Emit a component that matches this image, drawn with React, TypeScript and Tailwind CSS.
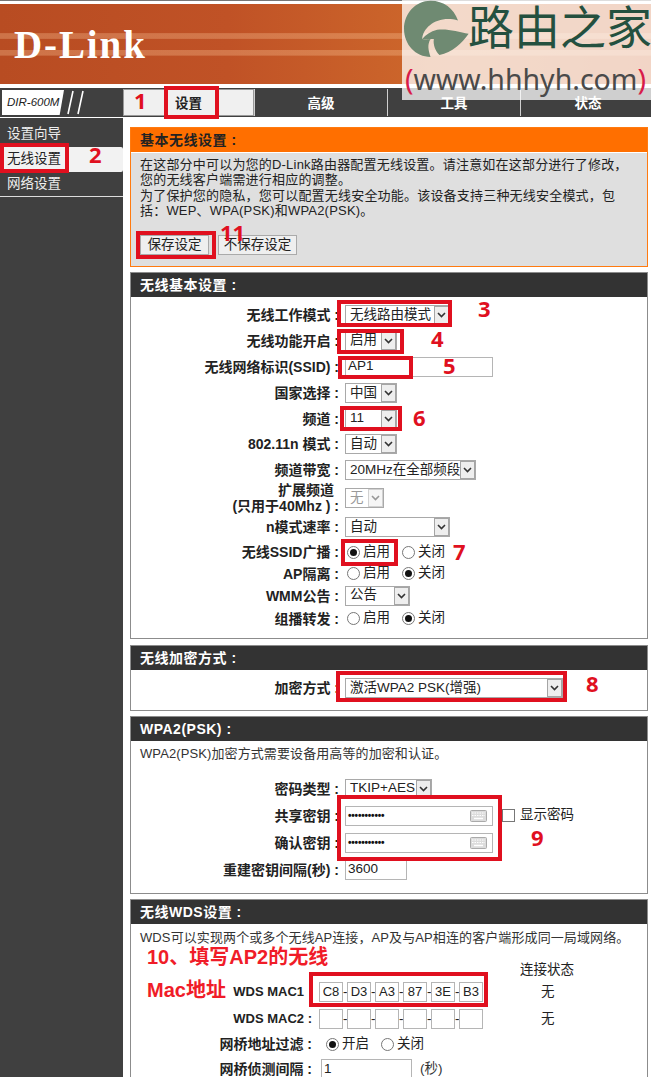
import React from 'react';

const font = 'font-["Liberation_Sans","Noto_Sans_CJK_SC",sans-serif]';

function Arrow({ disabled }: { disabled?: boolean }) {
  return (
    <span className={`flex h-full w-[15px] shrink-0 items-center justify-center border border-[#a5a5a5] bg-[#eeeeee] ${disabled ? 'opacity-50' : ''}`}>
      <svg width="9" height="6" viewBox="0 0 9 6">
        <path d="M1 1l3.5 3.5L8 1" fill="none" stroke="#333" strokeWidth="1.6" />
      </svg>
    </span>
  );
}

function Select({ text, width, disabled }: { text: string; width: string; disabled?: boolean }) {
  return (
    <div className={`flex h-[20px] items-center justify-between border border-[#a9a9a9] bg-white pl-1 ${width} ${disabled ? 'text-[#999]' : 'text-[#222]'}`}>
      <span className="whitespace-nowrap">{text}</span>
      <Arrow disabled={disabled} />
    </div>
  );
}

function Radio({ on, label, className = '' }: { on?: boolean; label: string; className?: string }) {
  return (
    <span className={`flex items-center ${className}`}>
      <span className="mr-[3px] flex h-[13px] w-[13px] items-center justify-center rounded-full border border-[#777] bg-white">
        {on && <span className="h-[7px] w-[7px] rounded-full bg-[#111]" />}
      </span>
      <span className="text-[#222]">{label}</span>
    </span>
  );
}

function Row({ label, height, children }: { label: React.ReactNode; height: string; children: React.ReactNode }) {
  return (
    <div className={`flex items-center ${height}`}>
      <div className="w-[208px] shrink-0 whitespace-pre text-right text-[14px] font-bold leading-[16px] text-[#222]">{label}</div>
      <div className="ml-[6px] flex items-center">{children}</div>
    </div>
  );
}

function Panel({ title, height, className = '', children }: { title: string; height: string; className?: string; children: React.ReactNode }) {
  return (
    <section className={`mr-[3px] border border-[#8c8c8c] bg-white ${height} ${className}`}>
      <h2 className="flex h-[24px] items-center whitespace-pre bg-[#333333] pl-[9px] text-[14px] font-bold tracking-[0.5px] text-white">{title}</h2>
      {children}
    </section>
  );
}

function Box({ className = '', children }: { className?: string; children?: React.ReactNode }) {
  return <div className={`flex h-[20px] items-center border border-[#b5b5b5] bg-white pl-[2px] text-[#222] ${className}`}>{children}</div>;
}

function KeyInput() {
  return (
    <div className="flex h-[20px] w-[148px] items-center justify-between border border-[#b5b5b5] bg-white pl-[2px] pr-[5px]">
      <span className="text-[10px] font-bold tracking-[-0.2px] text-[#111]">•••••••••••</span>
      <svg width="17" height="12" viewBox="0 0 17 12">
        <rect x="0.5" y="0.5" width="16" height="11" rx="1" fill="#dcdcdc" stroke="#aaa" />
        <path d="M2 3h13M2 5.5h13" stroke="#fff" strokeWidth="1" strokeDasharray="1.5 1" />
        <path d="M4 8.5h9" stroke="#fff" strokeWidth="1.4" />
      </svg>
    </div>
  );
}

function Mac({ values }: { values?: string[] }) {
  const cells = values ?? ['', '', '', '', '', ''];
  return (
    <div className="flex items-center">
      {cells.map((v, i) => (
        <React.Fragment key={i}>
          <span className="flex h-[20px] w-[24px] items-center justify-center border border-[#b5b5b5] bg-white text-[13px] text-[#222]">{v}</span>
          {i < 5 && <span className="w-[4px] text-center text-[#222]">-</span>}
        </React.Fragment>
      ))}
    </div>
  );
}

function RedBox({ className }: { className: string }) {
  return <div className={`pointer-events-none absolute border-[4px] border-[#e0101f] ${className}`} />;
}

function Num({ className, children }: { className: string; children: React.ReactNode }) {
  return <div className={`absolute font-["Open_Sans",sans-serif] text-[22px] font-bold leading-none text-[#e0101f] ${className}`}>{children}</div>;
}

const side = 'flex items-center pl-[7px] text-[13.5px]';
const tab = 'flex items-center justify-center border-l border-[#cfcfcf] pt-[3px] text-[13.5px] font-bold text-white';
const wdsLabel = 'w-[181px] shrink-0 whitespace-pre text-right text-[14px] font-bold text-[#222]';

export default function App() {
  return (
    <div className={`relative h-[1077px] w-[651px] overflow-hidden bg-white text-[13.5px] ${font}`}>
      {/* header */}
      <div className="h-[1px] bg-[#777]" />
      <div className="mt-[3px] flex h-[80px] items-center bg-[linear-gradient(180deg,transparent_36%,rgba(255,205,160,0.3)_37%,rgba(255,205,160,0.3)_43%,transparent_44%,transparent_57%,rgba(255,205,160,0.3)_58%,rgba(255,205,160,0.3)_64%,transparent_65%),linear-gradient(90deg,#b84c22_0%,#c05226_35%,#cf6a2c_70%,#c9591f_100%)] pl-[14px]">
        <span className='font-["Liberation_Serif",serif] text-[39px] font-bold leading-none tracking-[1.9px] text-white'>D-Link</span>
      </div>

      {/* nav */}
      <div className="mt-[4px] flex h-[29px] bg-[#404040] py-[1px]">
        <div className="flex w-[123px] shrink-0 items-center pl-[2px]">
          <span className="flex h-[25px] w-[62px] items-center bg-white pl-[5px] text-[11.5px] italic text-[#222] [clip-path:polygon(0_0,100%_0,93%_100%,0_100%)]">DIR-600M</span>
          <svg width="20" height="25" viewBox="0 0 20 25" className="ml-[2px]">
            <path d="M7 1L2 24M17 1L12 24" stroke="#fff" strokeWidth="1.6" />
          </svg>
        </div>
        <div className="flex flex-1">
          <div className="flex w-[131px] shrink-0 items-center justify-center border border-[#999] bg-[#f0f0f0] pt-[3px] text-[13.5px] font-bold text-[#222]">设置</div>
          <div className={`${tab} w-[133px]`}>高级</div>
          <div className={`${tab} w-[133px]`}>工具</div>
          <div className={`${tab} w-[131px] pl-[4px]`}>状态</div>
        </div>
      </div>

      <div className="flex h-[960px] pt-[1px]">
        {/* sidebar */}
        <aside className="w-[123px] shrink-0 bg-[#404040] pt-[4px] text-[#eee]">
          <div className={`${side} h-[25px]`}>设置向导</div>
          <div className={`${side} h-[25px] rounded-r-[2px] bg-[#f2f2f2] text-[#222]`}>无线设置</div>
          <div className={`${side} h-[25px] border-b border-[#ddd]`}>网络设置</div>
        </aside>

        {/* main */}
        <main className="flex-1 pl-[7px] pt-[9px]">
          <section className="mr-[3px] h-[140px] border border-[#ff7a10] bg-[#dfdfdf]">
            <h2 className="flex h-[24px] items-center whitespace-pre bg-[#ff6f00] pl-[9px] text-[14px] font-bold tracking-[0.5px] text-[#222]">基本无线设置 :</h2>
            <div className="border-t border-white pl-[9px] pt-[4px] text-[13px] leading-[15.4px] tracking-[0.2px] text-[#222]">
              <p>在这部分中可以为您的D-Link路由器配置无线设置。请注意如在这部分进行了修改，</p>
              <p>您的无线客户端需进行相应的调整。</p>
              <p>为了保护您的隐私，您可以配置无线安全功能。该设备支持三种无线安全模式，包</p>
              <p>括：WEP、WPA(PSK)和WPA2(PSK)。</p>
              <div className="mt-[16px] flex gap-[9px] tracking-normal">
                <button className="h-[20px] w-[69px] border border-[#aaa] bg-[#efefef] text-[13.5px] text-[#222]">保存设定</button>
                <button className="h-[20px] w-[79px] border border-[#aaa] bg-[#efefef] text-[13.5px] text-[#222]">不保存设定</button>
              </div>
            </div>
          </section>

          <Panel title="无线基本设置 :" height="h-[367px]" className="mt-[5px]">
            <div className="pt-[5px]">
              <Row label="无线工作模式 :" height="h-[26px]"><Select text="无线路由模式" width="w-[105px]" /></Row>
              <Row label="无线功能开启 :" height="h-[25px]"><Select text="启用" width="w-[52px]" /></Row>
              <Row label="无线网络标识(SSID) :" height="h-[27px]"><Box className="w-[148px]">AP1</Box></Row>
              <Row label="国家选择 :" height="h-[26px]"><Select text="中国" width="w-[52px]" /></Row>
              <Row label="频道 :" height="h-[25px]"><Select text="11" width="w-[52px]" /></Row>
              <Row label="802.11n 模式 :" height="h-[26px]"><Select text="自动" width="w-[52px]" /></Row>
              <Row label="频道带宽 :" height="h-[26px]"><Select text="20MHz在全部频段" width="w-[131px]" /></Row>
              <Row label={<>扩展频道<span className="pr-[5px]" />{'\n'}(只用于40Mhz ) :</>} height="h-[30px]"><Select text="无" width="w-[39px]" disabled /></Row>
              <Row label="n模式速率 :" height="h-[28px]"><Select text="自动" width="w-[105px]" /></Row>
              <Row label="无线SSID广播 :" height="h-[22px]"><Radio on label="启用" className="ml-[2px]" /><Radio label="关闭" className="ml-[12px]" /></Row>
              <Row label="AP隔离 :" height="h-[21px]"><Radio label="启用" className="ml-[2px]" /><Radio on label="关闭" className="ml-[12px]" /></Row>
              <Row label="WMM公告 :" height="h-[23px]"><Select text="公告" width="w-[65px]" /></Row>
              <Row label="组播转发 :" height="h-[23px]"><Radio label="启用" className="ml-[2px]" /><Radio on label="关闭" className="ml-[12px]" /></Row>
            </div>
          </Panel>

          <Panel title="无线加密方式 :" height="h-[66px]" className="mt-[6px]">
            <div className="pt-[7px]">
              <Row label="加密方式 :" height="h-[22px]"><Select text="激活WPA2 PSK(增强)" width="w-[218px]" /></Row>
            </div>
          </Panel>

          <Panel title="WPA2(PSK) :" height="h-[178px]" className="mt-[5px]">
            <p className="pl-[9px] pt-[5px] text-[13px] leading-[16px] tracking-[0.1px] text-[#333]">WPA2(PSK)加密方式需要设备用高等的加密和认证。</p>
            <div className="pt-[13px]">
              <Row label="密码类型 :" height="h-[27px]"><Select text="TKIP+AES" width="w-[87px]" /></Row>
              <Row label="共享密钥 :" height="h-[27px]">
                <KeyInput />
                <span className="ml-[9px] h-[13px] w-[13px] border border-[#777] bg-white" />
                <span className="ml-[5px] text-[#222]">显示密码</span>
              </Row>
              <Row label="确认密钥 :" height="h-[27px]"><KeyInput /></Row>
              <Row label="重建密钥间隔(秒) :" height="h-[27px]"><Box className="w-[62px]">3600</Box></Row>
            </div>
          </Panel>

          <Panel title="无线WDS设置 :" height="h-[200px]" className="mt-[5px]">
            <p className="whitespace-nowrap pl-[9px] pt-[6px] text-[13px] leading-[16px] tracking-[0.1px] text-[#333]">WDS可以实现两个或多个无线AP连接，AP及与AP相连的客户端形成同一局域网络。</p>
            <div className="flex justify-end pr-[73px] pt-[16px] leading-[16px] text-[#222]">连接状态</div>
            <div className="mt-[1px] flex h-[26px] items-center">
              <div className={`${wdsLabel} pr-[8px] !text-[13px]`}>WDS MAC1</div>
              <div className="ml-[7px]"><Mac values={['C8', 'D3', 'A3', '87', '3E', 'B3']} /></div>
              <span className="ml-[58px] text-[#222]">无</span>
            </div>
            <div className="mt-[1px] flex h-[26px] items-center">
              <div className={`${wdsLabel} !text-[13px]`}>WDS MAC2 :</div>
              <div className="ml-[7px]"><Mac /></div>
              <span className="ml-[58px] text-[#222]">无</span>
            </div>
            <div className="flex h-[25px] items-center">
              <div className={wdsLabel}>网桥地址过滤 :</div>
              <Radio on label="开启" className="ml-[14px]" />
              <Radio label="关闭" className="ml-[12px]" />
            </div>
            <div className="flex h-[24px] items-center">
              <div className={wdsLabel}>网桥侦测间隔 :</div>
              <Box className="ml-[9px] w-[91px]">1</Box>
              <span className="ml-[8px] text-[#333]">(秒)</span>
            </div>
          </Panel>
        </main>
      </div>

      {/* watermark */}
      <div className="absolute left-[402px] top-0 h-[100px] w-[249px] bg-[#fff]/75">
        <svg width="67" height="58" viewBox="0 0 200 175" className="absolute left-0 top-0">
          <path d="M168 62C155 25 125 2 85 2C40 2 5 40 5 87C5 135 40 172 85 172C78 150 75 135 85 118C70 120 65 120 60 118C62 80 110 45 168 62Z" fill="#6f8a72" />
          <path d="M200 102C170 95 130 85 105 90C85 95 70 105 60 118C70 120 80 118 95 118C92 135 100 155 112 166C150 160 180 130 200 102Z" fill="#6f8a72" />
        </svg>
        <span className="absolute left-[66px] top-[-1px] whitespace-nowrap text-[46px] leading-[58px] text-[#24503f]">路由之家</span>
        <span className="absolute left-[3px] top-[60px] whitespace-nowrap font-['Noto_Sans',sans-serif] text-[28.5px] leading-[38px] text-[#4a4a4a]"><span className="text-[#d81b4a]">(</span>www.hhhyh.com<span className="text-[#d81b4a]">)</span></span>
      </div>

      {/* annotations */}
      <RedBox className="left-[164px] top-[86px] h-[33px] w-[55px]" />
      <RedBox className="left-0 top-[143px] h-[30px] w-[69px]" />
      <RedBox className="left-[136px] top-[231px] h-[28px] w-[80px]" />
      <RedBox className="left-[337px] top-[300px] h-[27px] w-[115px]" />
      <RedBox className="left-[337px] top-[329px] h-[25px] w-[67px]" />
      <RedBox className="left-[338px] top-[356px] h-[23px] w-[75px]" />
      <RedBox className="left-[340px] top-[406px] h-[25px] w-[62px]" />
      <RedBox className="left-[341px] top-[539px] h-[27px] w-[57px]" />
      <RedBox className="left-[336px] top-[671px] h-[31px] w-[231px]" />
      <RedBox className="left-[337px] top-[795px] h-[66px] w-[165px]" />
      <RedBox className="left-[309px] top-[972px] h-[35px] w-[179px]" />

      <Num className="left-[134px] top-[89px]">1</Num>
      <Num className="left-[89px] top-[143px]">2</Num>
      <Num className="left-[220px] top-[221px]">11</Num>
      <Num className="left-[478px] top-[297px]">3</Num>
      <Num className="left-[431px] top-[327px]">4</Num>
      <Num className="left-[443px] top-[354px]">5</Num>
      <Num className="left-[413px] top-[406px]">6</Num>
      <Num className="left-[453px] top-[540px]">7</Num>
      <Num className="left-[586px] top-[672px]">8</Num>
      <Num className="left-[531px] top-[826px]">9</Num>
      <div className="absolute left-[147px] top-[945px] text-[20px] font-bold leading-[24px] text-[#f01c28]">10、填写AP2的无线</div>
      <div className="absolute left-[147px] top-[978px] text-[20px] font-bold leading-[24px] text-[#f01c28]">Mac地址</div>
    </div>
  );
}
